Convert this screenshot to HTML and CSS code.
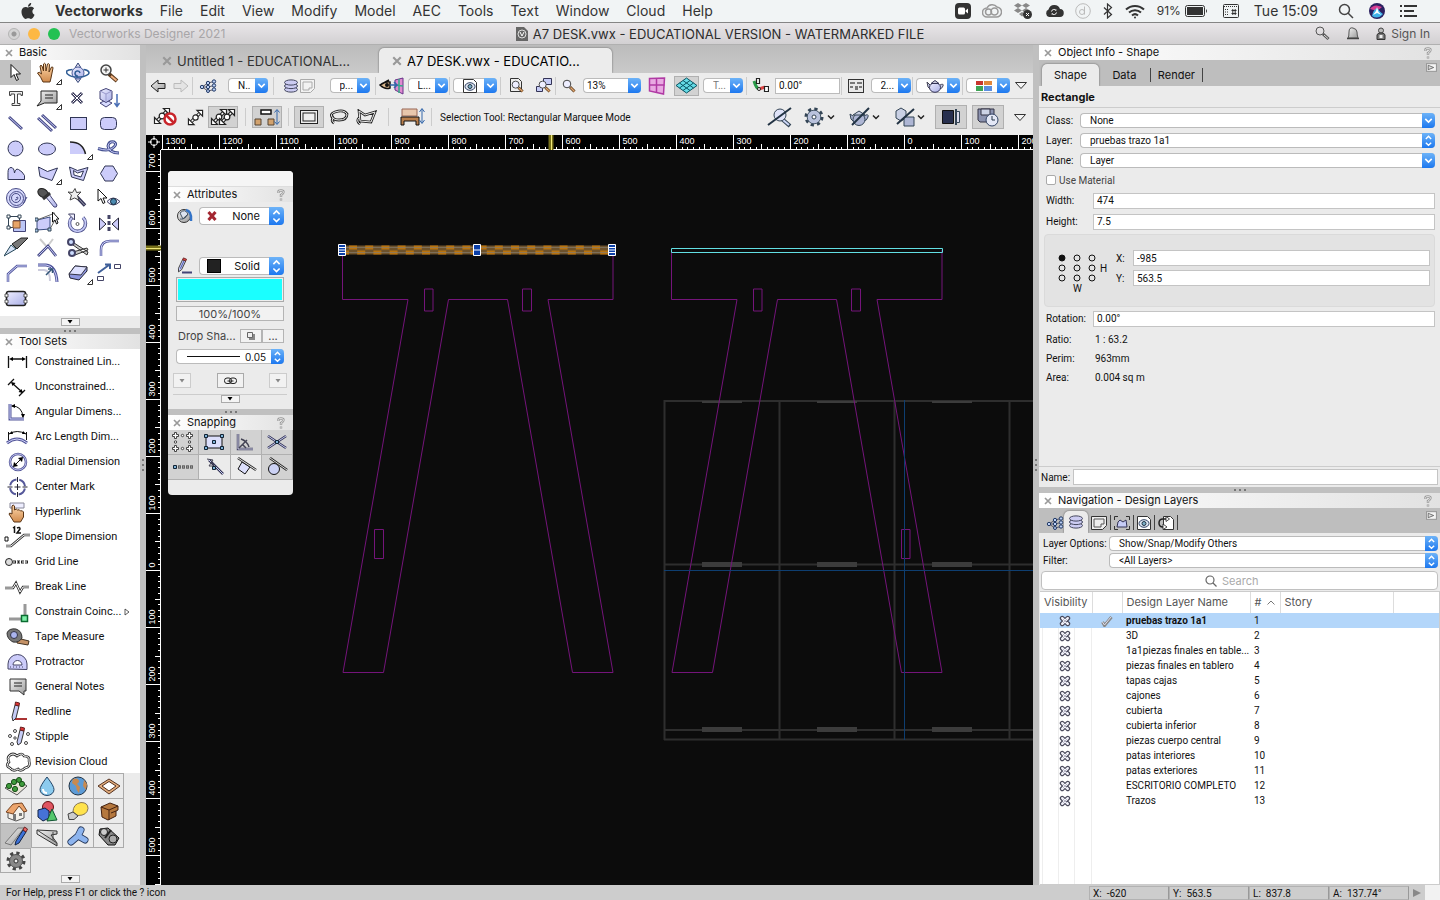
FILE: index.html
```html
<!DOCTYPE html>
<html lang="en">
<head>
  <meta charset="UTF-8" />
  <meta name="viewport" content="width=device-width, initial-scale=1.0" />
  <title>A7 DESK.vwx - Vectorworks Designer 2021</title>
  <link rel="stylesheet" href="styles.css">
</head>
<body>
  <!-- shared icons -->
  <svg class="sprite" aria-hidden="true">
    <defs>
      <linearGradient id="metal" x1="0" y1="0" x2="1" y2="1"><stop offset="0" stop-color="#f4f4f4"/><stop offset="1" stop-color="#999"/></linearGradient>
      <linearGradient id="skin" x1="0" y1="0" x2="0" y2="1"><stop offset="0" stop-color="#ffd9ad"/><stop offset="1" stop-color="#d08a4c"/></linearGradient>
      <linearGradient id="lilac" x1="0" y1="0" x2="1" y2="1"><stop offset="0" stop-color="#eeeeff"/><stop offset="1" stop-color="#a9aee6"/></linearGradient>
    </defs>
    <symbol id="down" viewBox="0 0 12 14"><path d="M3 5.500l3 3 3-3" fill="none" stroke="#fff" stroke-width="1.500"/></symbol>
    <symbol id="updown" viewBox="0 0 12 14"><path d="M3.500 5.500L6 3l2.500 2.500M3.500 9L6 11.500 8.500 9" fill="none" stroke="#fff" stroke-width="1.300"/></symbol>
    <symbol id="close" viewBox="0 0 8 8"><path d="M1 1l6 6M7 1L1 7" stroke="#999" stroke-width="1.700"/></symbol>
    <symbol id="help" viewBox="0 0 8 12"><path d="M1.500 4V2.500Q1.500 1.500 4 1.500T6.500 3Q6.500 4.500 4 6v2M4 9.500v2" fill="none" stroke="#999" stroke-width="2.400"/><path d="M1.500 3.600V2.500Q1.500 1.500 4 1.500T6.500 3Q6.500 4.500 4 6v1.600M4 10v1" fill="none" stroke="#eee" stroke-width=".8"/></symbol>
    <symbol id="caret" viewBox="0 0 8 4"><path d="M1.500 0h5L4 3.500z"/></symbol>
    <symbol id="flyout" viewBox="0 0 10 8"><rect x=".5" y=".5" width="9" height="7" fill="#f4f4f4" stroke="#999"/><path d="M2 2l5 2-5 2z" fill="#ddd" stroke="#555" stroke-width=".7"/></symbol>
    <symbol id="tri" viewBox="0 0 14 9"><path d="M1.500 1.500h11L7 7.500z" fill="#f4f4f4" stroke="#333"/></symbol>
    <symbol id="classes" viewBox="0 0 18 14"><path d="M3 8L9 4 15 2.500M3 8l6 0 6-1.500M3 8l6 4 6-1.500" stroke="#556" fill="none"/><g fill="#bcd0f5" stroke="#223a66"><circle cx="3" cy="8" r="1.700"/><circle cx="9" cy="4" r="1.700"/><circle cx="9" cy="8" r="1.700"/><circle cx="9" cy="12" r="1.500"/><circle cx="15" cy="2.500" r="1.700"/><circle cx="15" cy="6.500" r="1.700"/><circle cx="15" cy="10.500" r="1.700"/></g></symbol>
    <symbol id="layers" viewBox="0 0 16 14"><g fill="#ccccf2" stroke="#44475f"><ellipse cx="8" cy="10.500" rx="6.500" ry="2.600"/><ellipse cx="8" cy="7" rx="6.500" ry="2.600"/><ellipse cx="8" cy="3.500" rx="6.500" ry="2.600"/></g></symbol>
    <symbol id="lens" viewBox="0 0 14 14"><path d="M8 8l4.500 4.500" stroke="#5b3a1c" stroke-width="3"/><path d="M8.500 8.500l4 4" stroke="#e0a670" stroke-width="1.500"/><circle cx="5" cy="5" r="3.800" fill="#eef" stroke="#444"/></symbol>
    <symbol id="eyepage" viewBox="0 0 14 14"><path d="M.5.5h10l3 3v10H.5z" fill="#fff" stroke="#333"/><ellipse cx="7" cy="7.500" rx="5" ry="3.800" fill="#dde6f2" stroke="#346"/><circle cx="7" cy="7.500" r="2" fill="#7bb0c8" stroke="#234"/></symbol>
    <symbol id="hidden" viewBox="0 0 12 12"><path d="M3.200 3.200l5.600 5.600M8.800 3.200L3.200 8.800" stroke="#4a4a5c" stroke-width="4.800" stroke-linecap="round"/><path d="M3.200 3.200l5.600 5.600M8.800 3.200L3.200 8.800" stroke="#f2f2fa" stroke-width="2.400" stroke-linecap="round"/><path d="M4 4l4 4M8 4L4 8" stroke="#aab" stroke-width=".8"/></symbol>
    <symbol id="pencil" viewBox="0 0 20 20"><path d="M5 12.500L9.500 3l3.500 1.500L8.500 14 5 16.500z" fill="#c6ccf6" stroke="#333"/><path d="M9.500 3l1-2 3.500 1.500-1 2z" fill="#e04444" stroke="#622"/><path d="M11 4.500L7 13" stroke="#3947a0"/></symbol>
    <symbol id="snapseg" viewBox="0 0 18 18"><path d="M3 15L15 3" stroke="#222" stroke-width="3.500"/><path d="M3 15L15 3" stroke="#fff" stroke-width="1.400"/><g fill="#fff" stroke="#222" stroke-width="1.200"><circle cx="9" cy="9" r="2.800"/><path d="M1.500 10.500v6h6zM10.500 1.500h6v6z"/></g></symbol>
    <symbol id="teapot" viewBox="0 0 18 14"><path d="M4 6L1 3l1 5 3 3M14 6q4-2 3 1t-4 3" fill="#c8cdea" stroke="#445"/><ellipse cx="9" cy="8.500" rx="5.500" ry="4.800" fill="url(#lilac)" stroke="#335"/><path d="M5 4.500h8L9 1.500z" fill="#ccd" stroke="#335"/></symbol>
    <symbol id="flag" viewBox="0 0 6 6"><path d="M.5 5.500h5v-5z" fill="#fff" stroke="#333"/></symbol>
  </svg>

  <header class="menubar">
    <svg class="apple" width="14" height="16" viewBox="2 0 20 24" fill="#333"><path d="M12.152 6.896c-.948 0-2.415-1.078-3.960-1.040-2.040.027-3.910 1.183-4.961 3.014-2.117 3.675-.546 9.103 1.519 12.090 1.013 1.454 2.208 3.090 3.792 3.039 1.520-.065 2.090-.987 3.935-.987 1.831 0 2.350.987 3.960.948 1.637-.026 2.676-1.480 3.676-2.948 1.156-1.688 1.636-3.325 1.662-3.415-.039-.013-3.182-1.221-3.220-4.857-.026-3.040 2.480-4.494 2.597-4.559-1.429-2.090-3.623-2.324-4.390-2.376-2-.156-3.675 1.090-4.610 1.090zM15.530 3.830c.843-1.012 1.400-2.427 1.245-3.830-1.207.052-2.662.805-3.532 1.818-.78.896-1.454 2.338-1.273 3.714 1.338.104 2.715-.688 3.559-1.701"/></svg>
    <nav class="menus">
      <a href="#" class="app">Vectorworks</a>
      <a href="#">File</a><a href="#">Edit</a><a href="#">View</a><a href="#">Modify</a><a href="#">Model</a><a href="#">AEC</a><a href="#">Tools</a><a href="#">Text</a><a href="#">Window</a><a href="#">Cloud</a><a href="#">Help</a>
    </nav>
    <div class="extras">
      <svg width="16" height="16" viewBox="0 0 16 16"><rect width="16" height="16" rx="4" fill="#333"/><rect x="3" y="4.500" width="7" height="7" rx="1.500" fill="#fff"/><path d="M10.500 7.500L13 5.500v5l-2.500-2z" fill="#fff"/></svg>
      <svg width="20" height="16" viewBox="0 0 20 16" fill="none" stroke="#999" stroke-width="1.500"><path d="M5 14h9a5 5 0 0 0 1-10A6 6 0 0 0 5 5a4.500 4.500 0 0 0 0 9z"/><circle cx="6.500" cy="9" r="3"/><circle cx="12.500" cy="8.500" r="3.500"/></svg>
      <svg width="20" height="16" viewBox="0 0 20 16"><g fill="#888"><path d="M5 0l4 2.500L5 5 1 2.500zM13 0l4 2.500L13 5 9 2.500zM5 5l4 2.500L5 10 1 7.500zM13 5l4 2.500-4 2.500-4-2.500zM9 9l3 2-3 2.500L6 11z"/></g><circle cx="14.500" cy="11.500" r="4.500" fill="#333"/><path d="M13 10l3 3M16 10l-3 3" stroke="#fff"/></svg>
      <svg width="20" height="14" viewBox="0 0 20 14"><path d="M5 13h10.500a4 4 0 0 0 .5-8 6 6 0 0 0-11.500.5A4 4 0 0 0 5 13z" fill="#333"/><path d="M7.500 7.500a2.500 2.500 0 0 1 4.500-1v-1M12.500 8.500a2.500 2.500 0 0 1-4.500 1v1" stroke="#fff" fill="none"/></svg>
      <svg width="16" height="16" viewBox="0 0 16 16" fill="none" stroke="#bbb"><circle cx="8" cy="8" r="7.300"/><circle cx="7" cy="9" r="2.500"/><path d="M9.500 3.500v8"/></svg>
      <svg width="12" height="16" viewBox="0 0 12 16" fill="none" stroke="#333" stroke-width="1.200"><path d="M2 4.500l7.500 7-4 3.500V1l4 3.500-7.500 7"/></svg>
      <svg width="20" height="15" viewBox="0 0 20 15" fill="none" stroke="#333" stroke-width="2"><path d="M1 5.500a13 13 0 0 1 18 0M4 8.500a9 9 0 0 1 12 0M7 11.500a4.500 4.500 0 0 1 6 0"/><circle cx="10" cy="13.500" r="1" fill="#333" stroke="none"/></svg>
    </div>
    <div class="extras clock-group">
      <span class="battery">91%<svg width="23" height="12" viewBox="0 0 23 12"><rect x=".5" y=".5" width="19" height="11" rx="2" fill="none" stroke="#333"/><rect x="2" y="2" width="16" height="8" fill="#333"/><path d="M21 4q2 2 0 4z" fill="#333"/></svg></span>
      <svg width="16" height="14" viewBox="0 0 16 14" fill="none" stroke="#333"><rect x=".5" y=".5" width="15" height="13" rx="1"/><path d="M1 2.500h14M2 5.500h4M2 8h4M2 10.500h4" stroke-dasharray="1 1"/><path d="M8.500 6.500h5M8.500 9.500h5M9.800 5v6M12.200 5v6"/></svg>
      <span class="clock">Tue 15:09</span>
      <svg width="16" height="16" viewBox="0 0 16 16" fill="none" stroke="#444" stroke-width="1.500"><circle cx="6.500" cy="6.500" r="5"/><path d="M10 10l5 5"/></svg>
      <svg width="16" height="16" viewBox="0 0 16 16"><circle cx="8" cy="8" r="8" fill="#2b2060"/><path d="M1 6q4-6 12-2l-5 4z" fill="#d33c92"/><path d="M3 13q1-6 5-8 3 4 6 6-5 6-11 2z" fill="#3fb2e8"/><path d="M8 4l1.500 5 3 3L8 10l-4 2 3-4z" fill="#fff"/></svg>
      <svg width="18" height="12" viewBox="0 0 18 12" stroke="#333" stroke-width="2"><path d="M0 1h2M4 1h13M0 6h2M4 6h10M0 11h2M4 11h13"/></svg>
    </div>
  </header>

  <div class="titlebar">
    <div class="lights">
      <i class="light off"></i><i class="light min"></i><i class="light max"></i>
      <span>Vectorworks Designer 2021</span>
    </div>
    <div class="doc-title">
      <svg width="12" height="14" viewBox="0 0 12 14"><path d="M0 0h8l4 4v10H0z" fill="#666"/><circle cx="6" cy="7" r="4" fill="none" stroke="#ddd"/><path d="M4 5l2 4 2-4" stroke="#fff" fill="none"/></svg>
      A7 DESK.vwx - EDUCATIONAL VERSION - WATERMARKED FILE
    </div>
    <div class="account">
      <svg width="15" height="15" viewBox="0 0 15 15" fill="none"><path d="M8 8l5.500 5" stroke="#555" stroke-width="3"/><path d="M9 9l4 3.500" stroke="#ddd"/><circle cx="5" cy="5" r="4" stroke="#555"/></svg>
      <svg width="14" height="14" viewBox="0 0 14 14"><path d="M2 11q1-1 1-6t4-4 4 4 1 6z" fill="url(#metal)" stroke="#555"/><path d="M1 11.500h12" stroke="#444" stroke-width="1.500"/></svg>
      <a href="#"><svg width="10" height="13" viewBox="0 0 10 13"><circle cx="5" cy="3.500" r="2.500" fill="#bbb" stroke="#444"/><path d="M1 12.500V8q0-2 4-2t4 2v4.500z" fill="#777" stroke="#333"/><rect x="3.500" y="8" width="3" height="3" fill="#eee"/></svg>Sign In</a>
    </div>
  </div>

  <main class="workspace">
    <aside class="left">
      <h2 class="palette-head"><svg width="8" height="8"><use href="#close"/></svg>Basic</h2>
      <div class="tools">
        <button class="on" aria-label="Selection"><svg viewBox="0 0 24 24"><path d="M7 3.500v13l3-3 2.500 6 2-1-2.500-5.500h4.500z" fill="#fff" stroke="#111"/></svg></button>
        <button aria-label="Pan"><svg viewBox="0 0 24 24"><path d="M8 21q-2-5-5.500-9 1.500-2 4 1L5 5q1-1.500 2 0l1.500 5L8.500 3q1-1.500 2 0l.5 7 1.500-7q1-1 2 .5l-.5 7.500 2.500-5q1.500-.5 1.500 1L16 17l-1 4z" fill="url(#skin)" stroke="#5a3515"/></svg><svg class="flag"><use href="#flag"/></svg></button>
        <button aria-label="Flyover"><svg viewBox="0 0 24 24"><path d="M12 2l2.500 4v12L12 21.500 9.500 18V6z" fill="#dde" stroke="#347"/><circle cx="12" cy="12" r="6" fill="url(#lilac)" stroke="#4a5a98"/><path d="M6.500 8.500Q-2 9 1.500 13q5 4.500 16 2.500 7-2 5-5-1-1.500-5-2M12 15a2.500 2.500 0 1 1 2-3" fill="none" stroke="#335f96" stroke-width="1.600"/></svg></button>
        <button aria-label="Zoom"><svg viewBox="0 0 24 24"><path d="M12 13l8 7" stroke="#5b3a1c" stroke-width="4"/><path d="M14 15l5.500 4.500" stroke="#f0b080" stroke-width="2"/><circle cx="9" cy="9" r="5" fill="#f4f4f4" stroke="#444" stroke-width="1.500"/><path d="M6.500 9h5M9 6.500v5" stroke="#333"/></svg></button>
        <button aria-label="Text"><svg viewBox="0 0 24 24"><path d="M5.500 5.500h13v4H17V8h-3.500v9.500H16v2H8v-2h2.500V8H7v1.500H5.500z" fill="#eee" stroke="#444"/></svg></button>
        <button aria-label="Callout"><svg viewBox="0 0 24 24"><path d="M6 5h16v12H9.500L2 20l4-5z" fill="url(#metal)" stroke="#222"/><path d="M10 9h8M10 12h8" stroke="#222"/></svg><svg class="flag"><use href="#flag"/></svg></button>
        <button aria-label="Locus"><svg viewBox="0 0 24 24"><path d="M6 7l10 10M16 7L6 17" stroke="#335" stroke-width="3"/><path d="M6.500 7.500l9 9M15.500 7.500l-9 9" stroke="#fff"/></svg></button>
        <button aria-label="Symbol"><svg viewBox="0 0 24 24"><path d="M3 17l6-3 6 3-6 4z" fill="#d8dcff" stroke="#447"/><path d="M3 5l6-2.500L15 5v8l-6 3.500L3 13z" fill="url(#lilac)" stroke="#447"/><path d="M3 5l6 3 6-3M9 8v8" stroke="#99c" fill="none"/><path d="M20 8v12M17.500 17l2.500 3.500 2.500-3.500" stroke="#4a6fb5" fill="none" stroke-width="1.500"/></svg></button>
        <button aria-label="Line"><svg viewBox="0 0 24 24"><path d="M5 6l13 12" stroke="#4a4d88" stroke-width="3"/><path d="M5.500 6.500l12 11" stroke="#c4c8f5"/></svg></button>
        <button aria-label="Double Line"><svg viewBox="0 0 24 24"><path d="M3 7l14 13M7 4l14 13" stroke="#4a4d88" stroke-width="3"/><path d="M3.500 7.500l13 12M7.500 4.500l13 12" stroke="#c4c8f5"/></svg></button>
        <button aria-label="Rectangle"><svg viewBox="0 0 24 24" class="lil"><rect x="4.500" y="6.500" width="16" height="12"/></svg></button>
        <button aria-label="Rounded Rectangle"><svg viewBox="0 0 24 24" class="lil"><rect x="3.500" y="6.500" width="16" height="12" rx="4"/></svg></button>
        <button aria-label="Circle"><svg viewBox="0 0 24 24" class="lil"><circle cx="11.500" cy="12.500" r="7.500"/></svg></button>
        <button aria-label="Oval"><svg viewBox="0 0 24 24" class="lil"><ellipse cx="12" cy="13" rx="8.500" ry="6"/></svg></button>
        <button aria-label="Arc"><svg viewBox="0 0 24 24"><path d="M4 6q13 0 15.500 12H4z" fill="#ccccfa"/><path d="M4 6q13 0 15.500 12" stroke="#222" fill="none" stroke-width="1.500"/></svg><svg class="flag"><use href="#flag"/></svg></button>
        <button aria-label="Freehand"><svg viewBox="0 0 24 24" fill="none"><path d="M1 12.500q9 3 14 0 6-4 2-6.500-5-1-6 4 1 7 11 7" stroke="#44508f" stroke-width="3"/><path d="M1.500 12.500q9 3 13.500 0 6-4 2-6.500-5-1-6 4 1 7 10.500 7" stroke="#c4c8f5"/></svg></button>
        <button aria-label="Polyline"><svg viewBox="0 0 24 24" class="lil"><path d="M4 18.500v-7q0-5 3-5 3 0 3.500 5.500 1-5 4-3.500 4 2 6 6v4z"/></svg></button>
        <button aria-label="Polygon"><svg viewBox="0 0 24 24" class="lil"><path d="M3.500 6l9 4.500L22.500 7 17 19.500l-12-4z"/></svg><svg class="flag"><use href="#flag"/></svg></button>
        <button aria-label="Double Polygon"><svg viewBox="0 0 24 24" class="lil"><path d="M3.500 6l8 3.500L22 6.500l-4.500 13-12-3.500z"/><path d="M7.500 9.500l4 2.500 6-2-2.500 6-7-2z" fill="#fff"/></svg></button>
        <button aria-label="Regular Polygon"><svg viewBox="0 0 24 24" class="lil"><path d="M8 5h8l4.500 7.500L16 20H8l-4.500-7.500z"/></svg></button>
        <button aria-label="Spiral"><svg viewBox="0 0 24 24" fill="none" stroke="#4a4d88"><circle cx="12" cy="12" r="9.500" fill="#d5d8fb"/><circle cx="12.500" cy="12.500" r="7"/><circle cx="12" cy="12" r="4.500"/><path d="M12 12q2-2 2 0t-3 2"/><path d="M19 18l4-7"/></svg></button>
        <button aria-label="Eyedropper"><svg viewBox="0 0 24 24"><path d="M10 10l9 11q3 1 3-2L14 8z" fill="url(#lilac)" stroke="#447"/><ellipse cx="8" cy="7" rx="5.500" ry="4" transform="rotate(30 8 7)" fill="#555" stroke="#222"/><path d="M8 13l7-6" stroke="#333" stroke-width="3"/></svg></button>
        <button aria-label="Select Similar"><svg viewBox="0 0 24 24"><path d="M10 10l9 9.500" stroke="#335" stroke-width="3.500"/><path d="M11 11l7.500 8" stroke="#aab"/><path d="M9 2.500l1.500 4 4.500-.5-3.500 3.500L13 14l-4.500-2L4 14l1.500-5L2 6l4.500.5z" fill="#eee" stroke="#444"/></svg></button>
        <button aria-label="Visibility"><svg viewBox="0 0 24 24"><path d="M1 3v12l3-2.500 2 5 2-1-2-4.500h4z" fill="#fff" stroke="#111"/><path d="M10 15.500q6-7 13 0-7 7-13 0z" fill="#eef" stroke="#446"/><circle cx="16.500" cy="15.500" r="3" fill="#4b8ab0" stroke="#123"/></svg></button>
        <button aria-label="Clip"><svg viewBox="0 0 24 24"><path d="M9.500 9.500h12v11h-12z" fill="#bcc6f6" stroke="#447"/><path d="M4.500 5.500h11v11h-11z" fill="none" stroke="#345"/><path d="M9 10h7v7H9z" fill="#e8a468" stroke="#853"/><path d="M3 4h3v3H3zM14 4h3v3h-3zM3 15h3v3H3z" fill="#fff" stroke="#345"/></svg></button>
        <button aria-label="Reshape"><svg viewBox="0 0 24 24"><path d="M2 9l13-3v12L2 19z" fill="#ccccfa" stroke="#3a4c80"/><path d="M2 9L20 2M15 18l5-9" stroke="#666"/><path d="M0 7h3v3H0zM0 18h3v3H0zM13 17h3v3h-3z" fill="#aac8e8" stroke="#345"/><path d="M17.500 1v10l2.500-2 1.500 4 1.500-1-1.500-4h2.500z" fill="#fff" stroke="#111"/></svg></button>
        <button aria-label="Rotate"><svg viewBox="0 0 24 24" fill="none"><path d="M6 6.500a8 8 0 1 0 11 0" stroke="#4a4d88" stroke-width="3.500"/><path d="M6 6.500a8 8 0 1 0 11 0" stroke="#c4c8f5" stroke-width="1.800"/><path d="M2.500 3h6v6z" fill="#eef" stroke="#446"/><circle cx="11.500" cy="13" r="1.500" stroke="#555"/></svg></button>
        <button aria-label="Mirror"><svg viewBox="0 0 24 24"><path d="M2.500 7v12l6.500-6z" fill="#ccccfa" stroke="#223"/><path d="M21.500 7v12L15 13z" fill="#ccccfa" stroke="#223"/><path d="M12 4v18" stroke="#446" stroke-width="3" stroke-dasharray="4 2"/></svg></button>
        <button aria-label="Split"><svg viewBox="0 0 24 24"><path d="M0 20l7-11 5 4z" fill="#d5e2f6" stroke="#245"/><path d="M8 8l9-6h7L13 13z" fill="#777" stroke="#222"/></svg></button>
        <button aria-label="Connect/Combine"><svg viewBox="0 0 24 24"><path d="M5 3l7 8 6-8" stroke="#ccc" stroke-width="2" fill="none"/><path d="M3 20L13 10l8 10" stroke="#4a4d88" stroke-width="2.800" fill="none"/><path d="M3.500 19.500L13 10l8 10" stroke="#c4c8f5" fill="none"/></svg></button>
        <button aria-label="Trim"><svg viewBox="0 0 24 24"><path d="M7 9l14 10 1-3L8 7M7 16l14-4 1 2-13 5" fill="#ccc" stroke="#333"/><circle cx="5" cy="6" r="3" fill="#cdf" stroke="#446" stroke-width="2"/><circle cx="6" cy="17" r="3" fill="#cdf" stroke="#446" stroke-width="2"/></svg></button>
        <button aria-label="Fillet"><svg viewBox="0 0 24 24" fill="none"><path d="M4 20v-6q0-9 9-9h9" stroke="#4f549a" stroke-width="2.500"/><path d="M4 20v-6q0-9 9-9h9" stroke="#cfd2fa"/></svg></button>
        <button aria-label="Chamfer"><svg viewBox="0 0 24 24" fill="none"><path d="M4 21v-8l9-8h10" stroke="#4f549a" stroke-width="2.500"/><path d="M4 21v-8l9-8h10" stroke="#cfd2fa"/></svg></button>
        <button aria-label="Offset"><svg viewBox="0 0 24 24" fill="none"><path d="M3 9h6q6 0 6 11" stroke="#ccd" stroke-width="2"/><path d="M3 4h8q10 1 11 17" stroke="#4f549a" stroke-width="3"/><path d="M3 4h8q10 1 11 17" stroke="#cfd2fa"/><path d="M11 14l6-6M13 8h4.500v4" stroke="#357" stroke-width="1.500"/></svg></button>
        <button aria-label="Eraser"><svg viewBox="0 0 24 24"><path d="M3 13l6-8 12 1v4l-8 9-9-2z" fill="#8f98e0" stroke="#223"/><path d="M3 13l6-8 12 1-6 8z" fill="#dfe2ff" stroke="#334"/></svg><svg class="flag"><use href="#flag"/></svg></button>
        <button aria-label="Attribute Mapping"><svg viewBox="0 0 24 24"><path d="M17.500 3.500h6v4h-6zM.5 15.500h6v4h-6z" fill="#fff" stroke="#446"/><path d="M1 12l11-8M8 3.500h5V8" stroke="#3f5f99" fill="none" stroke-width="2"/></svg></button>
        <button aria-label="Wall Join"><svg viewBox="0 0 24 24"><rect x="2.500" y="5.500" width="19" height="14" rx="2" fill="url(#lilac)" stroke="#222" stroke-width="1.500"/><path d="M1 8h3v3H1zM1 14h3v3H1zM20 8h3v3h-3zM20 14h3v3h-3z" fill="#fff" stroke="#333" stroke-width=".8"/></svg></button>
      </div>
      <div class="more"><button aria-label="More tools"><svg width="8" height="4"><use href="#caret"/></svg></button></div>
      <div class="grip"></div>
      <h2 class="palette-head"><svg width="8" height="8"><use href="#close"/></svg>Tool Sets</h2>
      <ul class="toolset">
        <li><svg viewBox="0 0 28 24"><path d="M4.500 6v12M22.500 6v12M7 9h13" stroke="#111" stroke-width="1.300"/><path d="M5 9l4-2v4zM22 9l-4-2v4z"/></svg>Constrained Lin...</li>
        <li><svg viewBox="0 0 28 24"><path d="M4 10l6-6M15 21l6-6M8 8l10 9" stroke="#111" stroke-width="1.300"/><path d="M7 7l4.500 1-3 3zM19 18l-4.500-1 3-3z"/></svg>Unconstrained...</li>
        <li><svg viewBox="0 0 28 24"><path d="M6 4v15h14" stroke="#55589a" stroke-width="3" fill="none"/><path d="M6 4v15h14" stroke="#cfd2fa" fill="none"/><path d="M8 6q10 0 11 11" stroke="#111" fill="none"/><path d="M7 6l4-2v4zM19 18l-2-4h4z"/></svg>Angular Dimens...</li>
        <li><svg viewBox="0 0 28 24"><path d="M3 18q10-8 20 0" stroke="#55589a" stroke-width="3" fill="none"/><path d="M3 18q10-8 20 0" stroke="#cfd2fa" fill="none"/><path d="M4.500 7v8M22.500 7v8M5 9q8-5 17 0" stroke="#111" fill="none"/><path d="M5 9l3-3 1 3zM22 9l-3-3-1 3z"/></svg>Arc Length Dim...</li>
        <li><svg viewBox="0 0 28 24"><circle cx="14" cy="12" r="8" fill="#fff" stroke="#55589a" stroke-width="2.500"/><circle cx="14" cy="12" r="8" fill="none" stroke="#cfd2fa" stroke-width=".8"/><path d="M10 16l8-8" stroke="#111"/><path d="M9 17l1-5 4 4zM19 7l-1 5-4-4z"/></svg>Radial Dimension</li>
        <li><svg viewBox="0 0 28 24"><circle cx="13.500" cy="12" r="7.500" fill="none" stroke="#55589a" stroke-width="2" stroke-dasharray="9 2.800" stroke-dashoffset="-1.500"/><path d="M13.500 9v6M10.500 12h6M13.500 2v5M13.500 17v5M3.500 12h5M18.500 12h5" stroke="#223"/></svg>Center Mark</li>
        <li><svg viewBox="0 0 28 24"><path d="M6 3h14v5H6z" fill="#eef" stroke="#889"/><path d="M10 22l-5-8q0-2 3 0V6q1-2 2.500 0v4q2-2 3 0 2-1 3 1 2-1 3 1v5l-3 5z" fill="url(#skin)" stroke="#5a3515"/></svg>Hyperlink</li>
        <li><svg viewBox="0 0 28 24"><path d="M2 21h5L20 10h6" stroke="#333" stroke-width="2.500" fill="none"/><path d="M2 21h5L20 10h6" stroke="#fff" fill="none"/><path d="M9 3l1.500-1v6M13 3q3-1.500 3 1L13 8h4" stroke="#111" stroke-width="1.500" fill="none"/><path d="M1 12h3v4H1z" fill="#fff" stroke="#111"/></svg>Slope Dimension</li>
        <li><svg viewBox="0 0 28 24"><path d="M9 12h16" stroke="#222" stroke-width="3" stroke-dasharray="3 1"/><path d="M9 12h16" stroke="#fff" stroke-dasharray="2 1"/><circle cx="5" cy="12" r="3.500" fill="#ddd" stroke="#222"/></svg>Grid Line</li>
        <li><svg viewBox="0 0 28 24" fill="none"><path d="M1 13h8l3-5 4 9 3-5h6" stroke="#333" stroke-width="2.500"/><path d="M1 13h8l3-5 4 9 3-5h6" stroke="#fff"/></svg>Break Line</li>
        <li><svg viewBox="0 0 28 24"><path d="M5 19h16V4" stroke="#333" stroke-width="2.500" fill="none"/><path d="M5 19h16V4" stroke="#fff" fill="none"/><rect x="17.500" y="15.500" width="6" height="6" fill="#7df0a8" stroke="#0a6b30" stroke-width="1.500"/></svg>Constrain Coinc...<svg class="next" viewBox="0 0 6 8"><path d="M1 1l4 3-4 3z" fill="#fff" stroke="#333" stroke-width=".8"/></svg></li>
        <li><svg viewBox="0 0 28 24"><path d="M13 13l12 3-1 4-11-2z" fill="#c59266" stroke="#432"/><path d="M3 8q2-5 9-4 6 2 6 9-3 5-9 4-6-3-6-9z" fill="#777" stroke="#333"/><circle cx="10" cy="10" r="3.500" fill="#aab4ee" stroke="#334"/></svg>Tape Measure</li>
        <li><svg viewBox="0 0 28 24"><path d="M4 19v-5a9.500 9.500 0 0 1 19 0v5.500z" fill="#ccccfa" stroke="#446"/><path d="M9 15a4.500 4.500 0 0 1 9 0z" fill="#fff" stroke="#446"/><path d="M6 17h15" stroke="#446" stroke-dasharray="1 2"/></svg>Protractor</li>
        <li><svg viewBox="0 0 28 24"><path d="M6 4h16v12h-2v4l-5-4H6z" fill="url(#metal)" stroke="#333"/><path d="M10 8h8M10 11h8" stroke="#222"/></svg>General Notes</li>
        <li><svg viewBox="0 0 28 24"><path d="M11 19h12" stroke="#a33" stroke-width="2"/><path d="M8 17l3-12 4 1-3 12-3 3z" fill="#c6ccf6" stroke="#333"/><path d="M11 5l.5-3 4 1-.5 3z" fill="#d33" stroke="#622"/></svg>Redline</li>
        <li><svg viewBox="0 0 28 24"><path d="M13 17l3-12 4 1-3 12-3 2z" fill="#c6ccf6" stroke="#333"/><path d="M16 5l.5-3 4 1-.5 3z" fill="#d33" stroke="#622"/><g fill="#fff" stroke="#444"><circle cx="6" cy="11" r="1.500"/><circle cx="11" cy="6" r="1.500"/><circle cx="8" cy="19" r="1.500"/><circle cx="22" cy="18" r="1.500"/><circle cx="24" cy="9" r="1.500"/><circle cx="11" cy="13" r="1.200"/></g></svg>Stipple</li>
        <li><svg viewBox="0 0 28 24" fill="none"><path d="M5 6q4-4 8 0 5-4 7 0 6 0 5 5 2 6-4 7-4 4-7 1-5 3-8-1-5-2-1-6-2-4 0-6z" stroke="#333" stroke-width="2.600"/><path d="M5 6q4-4 8 0 5-4 7 0 6 0 5 5 2 6-4 7-4 4-7 1-5 3-8-1-5-2-1-6-2-4 0-6z" stroke="#fff"/></svg>Revision Cloud</li>
      </ul>
      <div class="categories">
        <button aria-label="Site Planning"><svg viewBox="0 0 24 22"><path d="M1 13l12-9 10 7-10 9z" fill="#e8e4d8" stroke="#555"/><g fill="#3e9b3c" stroke="#174d17"><circle cx="5" cy="11" r="2.600"/><circle cx="10" cy="7" r="2.600"/><circle cx="15" cy="5" r="2.500"/><circle cx="11" cy="14" r="2.600"/><circle cx="18" cy="9" r="2.600"/></g></svg></button>
        <button aria-label="Irrigation"><svg viewBox="0 0 24 22"><path d="M12 2q7 9 7 12.500a7 6 0 0 1-14 0Q5 11 12 2z" fill="#8ccbee" stroke="#246"/><path d="M8 14q0 4 4 4" stroke="#fff" fill="none" stroke-width="2"/></svg></button>
        <button aria-label="GIS"><svg viewBox="0 0 24 22"><circle cx="12" cy="11" r="9" fill="#5d9bd6" stroke="#234"/><path d="M7 4q6-2 6 3l-2 2 3 3-1 6q-3-3-3-7L6 8zM18 5l3 4-1 6-3-4z" fill="#c98a50"/></svg></button>
        <button aria-label="Space Planning"><svg viewBox="0 0 24 22"><path d="M1 11l11-7 11 7-11 8z" fill="#e3ad7c" stroke="#532"/><path d="M5 11l7-4.500 7 4.500-7 5z" fill="#fff" stroke="#532"/></svg></button>
        <button aria-label="Building Shell"><svg viewBox="0 0 24 22"><path d="M4 11v7l8 3 8-3v-7l-5-5z" fill="#f4f1ea" stroke="#555"/><path d="M2 12l7-8 9-1 5 8-3 1-5-6-6 8z" fill="#eca46c" stroke="#742"/><path d="M9 14h3v6H9zM15 13h3v3h-3z" fill="#777"/></svg></button>
        <button aria-label="3D Modeling"><svg viewBox="0 0 24 22"><circle cx="13" cy="7" r="5.500" fill="#e05561" stroke="#611"/><path d="M3 10l7-2 4 3v7l-6 3-5-4z" fill="#4672d8" stroke="#124"/><path d="M17 9l5 11-10 1z" fill="#54c76c" stroke="#153"/></svg></button>
        <button aria-label="Visualization"><svg viewBox="0 0 24 22"><path d="M7 12q0-8 8-9.500 7 0 7 6-1 7-10 7z" fill="#ffe34d" stroke="#875"/><path d="M2 14l5-2 5 4-4 3.500-5 0z" fill="#ccc" stroke="#444"/></svg></button>
        <button aria-label="Furniture"><svg viewBox="0 0 24 22"><path d="M4 7l9-4 8 3v4l-2 1v5l-8 4-6-3z" fill="#b5783e" stroke="#421"/><path d="M4 7l8 3 9-4M12 10v10M14 13l5-2" stroke="#421" fill="none"/></svg></button>
        <button class="on" aria-label="Dims/Notes"><svg viewBox="0 0 24 22"><path d="M1 18L14 3h6L7 20z" fill="url(#metal)" stroke="#777"/><path d="M12 16L19 5l3 2-7 11-4 2z" fill="#3d72d8" stroke="#124"/><path d="M19 5l1.500-3 3 2L22 7z" fill="#e66" stroke="#622"/></svg></button>
        <button aria-label="Detailing"><svg viewBox="0 0 24 22"><path d="M2 5L22 6v3l-6 1 6 8v3L2 9z" fill="url(#metal)" stroke="#333"/><path d="M2 5l20 13M18 7v8" stroke="#444"/></svg></button>
        <button aria-label="Piping"><svg viewBox="0 0 24 22"><path d="M5 17l7-6 7 4M12 11l3-6" stroke="#235" stroke-width="7" stroke-linecap="round" fill="none"/><path d="M5 17l7-6 7 4M12 11l3-6" stroke="#8db4ee" stroke-width="5.400" stroke-linecap="round" fill="none"/></svg></button>
        <button aria-label="Fasteners"><svg viewBox="0 0 24 22"><path d="M3 4l8-1 11 10-4 7-7 0L2 10z" fill="#888" stroke="#111"/><circle cx="7" cy="7" r="3.500" fill="#ccc" stroke="#222"/><circle cx="16" cy="14" r="4" fill="#aaa" stroke="#222"/><path d="M8 13l6-8" stroke="#222" stroke-width="2"/></svg></button>
        <button aria-label="Machine Design"><svg viewBox="0 0 24 22"><circle cx="12" cy="11" r="7.500" fill="none" stroke="#444" stroke-width="4" stroke-dasharray="3 2.900"/><circle cx="12" cy="11" r="6.500" fill="#888" stroke="#555"/><circle cx="12" cy="11" r="2" fill="#eee" stroke="#333"/></svg></button>
      </div>
      <div class="more"><button aria-label="More tool sets"><svg width="8" height="4"><use href="#caret"/></svg></button></div>
    </aside>

    <div class="gutter"></div>

    <section class="document">
      <div class="doc-tabs">
        <button><svg width="10" height="10" viewBox="0 0 8 8"><use href="#close"/></svg>Untitled 1 - EDUCATIONAL...</button>
        <button class="active"><svg width="10" height="10" viewBox="0 0 8 8"><use href="#close"/></svg>A7 DESK.vwx - EDUCATIO...</button>
      </div>

      <div class="viewbar">
        <svg width="16" height="14" viewBox="0 0 16 14"><path d="M1 7l7-6v3.500h7v5H8V13z" fill="url(#metal)" stroke="#222"/></svg>
        <svg width="16" height="14" viewBox="0 0 16 14"><path d="M15 7L8 1v3.500H1v5h7V13z" fill="#e4e4e4" stroke="#bbb"/></svg>
        <i class="sep"></i>
        <svg width="18" height="14"><use href="#classes"/></svg>
        <span class="combo"><select aria-label="Class"><option>N..</option></select><svg class="arrow"><use href="#down"/></svg></span>
        <i class="sep"></i>
        <svg width="32" height="14" viewBox="0 0 32 14"><use href="#layers" width="16" height="14"/><path d="M17.500.5h14v9l-4 4h-10zM20 3h9v6h-3v2h-6z" fill="#f2f2f2" stroke="#aaa"/></svg>
        <span class="combo"><select aria-label="Layer"><option>p...</option></select><svg class="arrow"><use href="#down"/></svg></span>
        <i class="sep"></i>
        <svg width="25" height="18" viewBox="0 0 25 18"><path d="M1 8l9-5M1 8q5 5 10 3V5q-4-1-10 3z" fill="#dcb98e" stroke="#111" stroke-width="1.500"/><circle cx="8" cy="8" r="2" fill="#111"/><path d="M16 3l8-2v16l-8-4z" fill="#e08ad0" stroke="#638"/><path d="M20 2v14M16 8l8 1" stroke="#3a8" stroke-width="1.500"/><path d="M11 8h7M15 5l3 3-3 3" stroke="#36a" fill="none" stroke-width="1.500"/></svg>
        <span class="combo"><select aria-label="Saved View"><option>L...</option></select><svg class="arrow"><use href="#down"/></svg></span>
        <i class="sep"></i>
        <span class="combo pic"><svg class="face" width="14" height="14"><use href="#eyepage"/></svg><select aria-label="Saved Views"><option></option></select><svg class="arrow"><use href="#down"/></svg></span>
        <i class="sep"></i>
        <svg width="15" height="15" viewBox="0 0 15 15"><path d="M1.500.5h8l3 3v10h-11z" fill="#eee" stroke="#333"/><use href="#lens" x="2" y="2" width="13" height="13"/></svg>
        <svg width="16" height="15" viewBox="0 0 16 15"><path d="M7.500.5h8v6h-8zM.5 8.500h6v5h-6z" fill="#c6ccf6" stroke="#335"/><use href="#lens" x="2" y="2" width="13" height="13"/></svg>
        <i class="sep"></i>
        <svg width="14" height="14"><use href="#lens"/></svg>
        <span class="combo square wide"><select aria-label="Zoom level"><option>13%</option></select><svg class="arrow"><use href="#down"/></svg></span>
        <svg width="18" height="18" viewBox="0 0 18 18"><path d="M1.500 1.500L16.500 1l-1 16-14-3z" fill="#e9a9e2" stroke="#b03aa4" stroke-width="1.500"/><path d="M8.500 1v15M1.500 8h15" stroke="#b03aa4" stroke-width="1.500"/></svg>
        <button class="toggle" aria-label="Unified view"><svg width="23" height="17" viewBox="0 0 23 17"><path d="M1 8.500L11.500 1 22 8.500 11.500 16z" fill="#65dbe6" stroke="#0b5563"/><path d="M4.500 6L15 13.500M8 3.500L18.500 11M4.500 11L15 3.500M8 13.500L18.500 6" stroke="#0b5563"/></svg></button>
        <span class="combo dim"><select aria-label="View"><option>T...</option></select><svg class="arrow"><use href="#down"/></svg></span>
        <i class="sep"></i>
        <svg width="17" height="15" viewBox="0 0 17 15"><path d="M2 3q2 7 5 8" stroke="#2a9a4a" stroke-width="3" fill="none"/><path d="M7 11l6-2" stroke="#d44" stroke-width="3"/><path d="M4.500.5h3v5h-3zM12.500 8.500h4v5h-4z" fill="#fff" stroke="#222" stroke-width="1.200"/><circle cx="7" cy="11" r="1.500" fill="#fff" stroke="#222"/></svg>
        <input class="angle" type="text" value="0.00°" aria-label="Plan rotation">
        <i class="sep"></i>
        <svg width="16" height="14" viewBox="0 0 16 14"><rect x=".5" y=".5" width="15" height="13" fill="#e8e8e8" stroke="#333"/><path d="M2 3h5v2H2zM2 7h3v2H2zM9 3h5v2H9zM7 7h3v4H7zM11 7h3v2h-3z" fill="#777"/></svg>
        <span class="combo"><select aria-label="Projection"><option>2...</option></select><svg class="arrow"><use href="#down"/></svg></span>
        <i class="sep"></i>
        <span class="combo pic"><svg class="face" width="18" height="14"><use href="#teapot"/></svg><select aria-label="Render mode"><option></option></select><svg class="arrow"><use href="#down"/></svg></span>
        <i class="sep"></i>
        <span class="combo pic"><svg class="face" width="16" height="10" viewBox="0 0 16 10"><path d="M0 0h7v4H0z" fill="#c8362e"/><path d="M8 0h8v4H8z" fill="#e2873b"/><path d="M0 5h7v5H0z" fill="#3fa556"/><path d="M8 5h8v5H8z" fill="#5c8fe0"/></svg><select aria-label="Data visualization"><option></option></select><svg class="arrow"><use href="#down"/></svg></span>
        <svg width="14" height="9"><use href="#tri"/></svg>
      </div>

      <div class="modebar">
        <svg width="24" height="20" viewBox="0 0 24 20"><use href="#snapseg" width="18" height="18"/><circle cx="17" cy="12" r="5.500" fill="#fff" stroke="#c8242a" stroke-width="2.500"/><path d="M13 8l8 8" stroke="#c8242a" stroke-width="2.500"/></svg>
        <svg width="17" height="17"><use href="#snapseg"/></svg>
        <button class="toggle" aria-label="Multiple interactive scaling"><svg width="26" height="18" viewBox="0 0 26 18"><use href="#snapseg" width="18" height="18"/><use href="#snapseg" x="8" width="18" height="18"/></svg></button>
        <i class="sep"></i>
        <button class="toggle" aria-label="Enable connected objects"><svg width="26" height="18" viewBox="0 0 26 18"><rect x="7" y="2" width="10" height="4" fill="#fff" stroke="#111" stroke-width="1.500"/><path d="M1 11h6v6H1zM14 11h6v6h-6z" fill="#d2a26e" stroke="#543"/><path d="M23 2v14M20.500 4.500L23 1.500l2.500 3M20.500 13.500l2.500 3 2.500-3" stroke="#36a" fill="none"/></svg></button>
        <i class="sep"></i>
        <button class="toggle" aria-label="Rectangular marquee"><svg width="18" height="14" viewBox="0 0 18 14" fill="#eee" stroke="#222"><rect x=".5" y=".5" width="17" height="13"/><rect x="3" y="3" width="12" height="8"/></svg></button>
        <svg width="20" height="16" viewBox="0 0 20 16" fill="none"><path d="M4 9Q0 5 6 3q9-3 12 2 0 6-8 6-5 0-6-2-2 3 1 5" stroke="#222" stroke-width="2.800"/><path d="M4 9Q0 5 6 3q9-3 12 2 0 6-8 6-5 0-6-2-2 3 1 5" stroke="#eee"/></svg>
        <svg width="22" height="16" viewBox="0 0 22 16" fill="none"><path d="M4 2l6 4 10-3-4 10-11-1zM4 9q-3 3 1 6" stroke="#222" stroke-width="2.600"/><path d="M4 2l6 4 10-3-4 10-11-1zM4 9q-3 3 1 6" stroke="#eee"/></svg>
        <i class="sep"></i>
        <svg width="25" height="20" viewBox="0 0 25 20"><path d="M2 2h15v7H2z" fill="#e8c7ac" stroke="#965"/><path d="M1 10h18v8h-3v-4H4v4H1z" fill="#b97f4c" stroke="#111"/><path d="M22 2v14M19.500 5L22 1.500l2.500 3.500M19.500 13l2.500 3.500 2.500-3.500" stroke="#36a" fill="none"/></svg>
        <i class="sep"></i>
        <p>Selection Tool: Rectangular Marquee Mode</p>
        <svg width="26" height="22" viewBox="0 0 26 22"><path d="M15 13l8 7" stroke="#345" stroke-width="4"/><path d="M16 14l6 5" stroke="#ccd6f6" stroke-width="2"/><circle cx="13" cy="9" r="6" fill="#dfe3f8" stroke="#345"/><path d="M1 19L24 2" stroke="#234" stroke-width="2"/></svg>
        <svg width="32" height="22" viewBox="0 0 32 22"><circle cx="10" cy="11" r="7.500" fill="none" stroke="#345" stroke-width="4" stroke-dasharray="3 2.900"/><circle cx="10" cy="11" r="6.800" fill="#b9c2dd" stroke="#456"/><circle cx="10" cy="11" r="2" fill="#fff" stroke="#345"/><path d="M24 9.500l3 3 3-3" fill="none" stroke="#222" stroke-width="1.500"/></svg>
        <svg width="32" height="22" viewBox="0 0 32 22"><path d="M4 10L1 8l1 5 4 4M15 10q5-3 4 1t-5 4" fill="#aeb6d4" stroke="#345"/><ellipse cx="10" cy="13.500" rx="6" ry="6" fill="#aeb6d4" stroke="#345"/><path d="M4 9h12l-6-4z" fill="#c9d0e4" stroke="#345"/><path d="M3 19L20 2" stroke="#234" stroke-width="2"/><path d="M24 9.500l3 3 3-3" fill="none" stroke="#222" stroke-width="1.500"/></svg>
        <svg width="32" height="22" viewBox="0 0 32 22"><path d="M2 5l5-3 5 3v7l-5 3-5-3z" fill="#c9d0e4" stroke="#345"/><path d="M10 11h10v9H10z" fill="#aeb6d4" stroke="#345"/><path d="M3 18L20 3" stroke="#234" stroke-width="2"/><path d="M24 9.500l3 3 3-3" fill="none" stroke="#222" stroke-width="1.500"/></svg>
        <button class="toggle big" aria-label="Auto join"><svg width="18" height="18" viewBox="0 0 18 18"><path d="M.5 2.500h11v13H.5z" fill="#28304f" stroke="#111"/><path d="M14 1v16" stroke="#345" stroke-width="2"/><path d="M14.500 3.500h3v11h-3z" fill="#dde" stroke="#345"/></svg></button>
        <button class="toggle big" aria-label="Auto save"><svg width="22" height="19" viewBox="0 0 22 19"><path d="M1 1h16v13H3l-2-2z" fill="#8c93b0" stroke="#334"/><path d="M4 1h9v6H4z" fill="#cdd3e6" stroke="#334"/><circle cx="15" cy="12" r="6" fill="#e4e8f6" stroke="#346"/><path d="M15 8v4h3" stroke="#234" fill="none"/></svg></button>
        <svg width="14" height="9"><use href="#tri"/></svg>
      </div>

      <div class="sheet">
        <div class="origin"><svg width="14" height="14" viewBox="0 0 14 14" fill="none" stroke="#fff"><circle cx="7" cy="7" r="3.500"/><path d="M7 1v4M7 9v4M1 7h4M9 7h4"/></svg></div>
        <svg class="ruler" id="ruler-x"></svg>
        <svg class="ruler" id="ruler-y"></svg>
        <div class="canvas">
          <svg class="drawing" id="drawing">
            <!-- sheet grid -->
            <g stroke="#2e2e2e" stroke-width="2" fill="none">
              <path d="M503.500 250V590M618.500 250V590M733.500 250V590M848.500 250V590"/>
              <path d="M503 251H2000M503 414.500H2000M503 580H2000M503 589.500H2000"/>
            </g>
            <path d="M541 252h40M656 252h40M771 252h40" stroke="#3c3c3c" stroke-width="2"/>
            <path d="M541 414.500h40M656 414.500h40M771 414.500h40M541 579.500h40M656 579.500h40M771 579.500h40" stroke="#3c3c3c" stroke-width="5"/>
            <!-- trestles -->
            <g fill="none" stroke="#74147a">
              <g transform="translate(181.500 100)">
                <path id="trestle" d="M0 0V49.500H65.500L.5 422.500H41L106 49.500H165L230 422.500H270.500L205.500 49.500H270.500V0M82 39h8.500v22H82zM180 39h9v22h-9z"/>
                <path d="M32 279.500h9v29h-9z"/>
              </g>
              <g transform="translate(510.500 100)">
                <use href="#trestle"/>
                <path d="M230 279.500h8.500v29H230z"/>
              </g>
            </g>
            <path d="M503 420.500H2000M743.500 250V590" stroke="#0e3e70"/>
            <path d="M510.500 98.500h271v4h-271z" fill="none" stroke="#62dfe3"/>
            <!-- selected top -->
            <path d="M181 100h270" stroke="#6d522c" stroke-width="9"/>
            <path d="M188 97.500h263" stroke="#b8730f" stroke-width="4" stroke-dasharray="8 8.200"/>
            <path d="M180 102.500h270" stroke="#b8730f" stroke-width="4" stroke-dasharray="8 8.200"/>
            <path d="M181 97.500h270M181 102.500h270" stroke="#857c6e" stroke-opacity=".7"/>
            <g stroke="#fff" fill="#0b3fa8">
              <path d="M177.500 94.500h7v11h-7zM447.500 94.500h7v11h-7zM312.500 94.500h7v11h-7z"/>
              <path d="M178 97.500h6M178 100h6M178 102.500h6M448 97.500h6M448 100h6M448 102.500h6M313 100h6"/>
            </g>
          </svg>

          <div class="floating">
            <div class="float-top"></div>
            <h2 class="palette-head"><svg width="8" height="8"><use href="#close"/></svg>Attributes<svg class="q" width="8" height="12"><use href="#help"/></svg></h2>
            <div class="attributes">
              <div class="attr fill-row">
                <svg width="18" height="18" viewBox="0 0 18 18"><circle cx="8" cy="9" r="6.500" fill="url(#metal)" stroke="#333"/><path d="M4 6q5-5 8 1l-5 5zM4 12q5 1 8-5" fill="#dde4f0" stroke="#456"/><path d="M10 3q6 1 5 11" stroke="#3474c8" stroke-width="2.500" fill="none"/></svg>
                <span class="combo big"><svg class="face" width="10" height="10" viewBox="0 0 10 10"><path d="M1.500 1l7 8M8.500 1l-7 8" stroke="#a32630" stroke-width="3"/></svg><select aria-label="Fill style"><option>None</option></select><svg class="arrow"><use href="#updown"/></svg></span>
              </div>
              <div class="attr">
                <svg width="18" height="18" viewBox="0 0 18 18"><use href="#pencil" x="-2" width="18" height="18"/><path d="M6 15.500h10" stroke="#447" stroke-width="2"/></svg>
                <span class="combo big"><svg class="face" width="14" height="14" viewBox="0 0 14 14"><rect x=".5" y=".5" width="13" height="13" fill="#222" stroke="#000"/></svg><select aria-label="Pen style"><option>Solid</option></select><svg class="arrow"><use href="#updown"/></svg></span>
              </div>
              <button class="swatch" aria-label="Pen colour"></button>
              <button class="flat opacity">100%/100%</button>
              <div class="shadow-row">Drop Sha...<button class="flat" aria-label="Drop shadow"><svg width="8" height="8" viewBox="0 0 8 8"><path d="M2 2h6v6H2z" fill="#888"/><path d="M.5.500h5v5h-5z" fill="#eee" stroke="#666"/></svg></button><button class="flat">...</button></div>
              <span class="combo thickness"><i></i><select aria-label="Line thickness"><option>0.05</option></select><svg class="arrow"><use href="#updown"/></svg></span>
              <div class="markers">
                <button class="flat" aria-label="Start marker"><svg width="8" height="4" fill="#888"><use href="#caret"/></svg></button>
                <button class="flat link" aria-label="Link markers"><svg width="13" height="8" viewBox="0 0 13 8" fill="none" stroke="#222"><rect x=".5" y="1" width="7" height="5.500" rx="2.500"/><rect x="5.500" y="1" width="7" height="5.500" rx="2.500"/><path d="M3.500 4h6"/></svg></button>
                <button class="flat" aria-label="End marker"><svg width="8" height="4" fill="#888"><use href="#caret"/></svg></button>
              </div>
              <div class="more line"><button aria-label="More attributes"><svg width="8" height="4"><use href="#caret"/></svg></button></div>
            </div>
            <div class="grip"></div>
            <h2 class="palette-head"><svg width="8" height="8"><use href="#close"/></svg>Snapping<svg class="q" width="8" height="12"><use href="#help"/></svg></h2>
            <div class="snaps">
              <button class="on" aria-label="Snap to grid"><svg viewBox="0 0 24 20"><g fill="#fff" stroke="#333" stroke-width=".9"><path id="plus" d="M3.500.5h2v2h2v2h-2v2h-2v-2h-2v-2h2z"/><use href="#plus" x="14"/><use href="#plus" y="13"/><use href="#plus" x="14" y="13"/><circle cx="11.500" cy="3.500" r="1.200"/><circle cx="11.500" cy="16.500" r="1.200"/><circle cx="4.500" cy="10" r="1.200"/><circle cx="18.500" cy="10" r="1.200"/></g></svg></button>
              <button class="on" aria-label="Snap to object"><svg viewBox="0 0 24 20"><rect x="4" y="4" width="16" height="12" fill="#dcdffb" stroke="#111"/><g fill="#7fb4d8" stroke="#123"><path d="M2.500 2.500h3v3h-3zM18.500 2.500h3v3h-3zM2.500 14.500h3v3h-3zM18.500 14.500h3v3h-3zM10.500 8.500h3v3h-3z"/></g></svg></button>
              <button class="on" aria-label="Snap to angle"><svg viewBox="0 0 24 20" fill="none"><path d="M4 2v15h15" stroke="#446" stroke-width="2.500"/><path d="M4 2v15h15" stroke="#ccd"/><path d="M5 16l8-8M7 7q6 2 8 8M9 13l3 3" stroke="#445" stroke-width="1.500"/></svg></button>
              <button class="on" aria-label="Snap to intersection"><svg viewBox="0 0 24 20"><path d="M3 4l18 12M3 16L21 4" stroke="#335" stroke-width="2.500"/><path d="M3 4l18 12M3 16L21 4" stroke="#c8cef0"/><path d="M10.500 8.500h3v3h-3z" fill="#7fb4d8" stroke="#123"/></svg></button>
              <button class="on" aria-label="Smart points"><svg viewBox="0 0 24 20"><path d="M7 10h16" stroke="#333" stroke-width="3" stroke-dasharray="3 1"/><path d="M7.500 10h16" stroke="#eee" stroke-dasharray="2 2"/><path d="M2.500 8.500h3v3h-3z" fill="#7fb4d8" stroke="#123"/></svg></button>
              <button aria-label="Snap to distance"><svg viewBox="0 0 24 20"><path d="M7 3l14 14" stroke="#335" stroke-width="2.500"/><path d="M7 3l14 14" stroke="#c8cef0"/><path d="M5 2l6 1-4 6h6M9 5l3 3" fill="none" stroke="#445"/><path d="M10.500 9.500h3v3h-3z" fill="#7fb4d8" stroke="#123"/></svg></button>
              <button aria-label="Snap to edge"><svg viewBox="0 0 24 20"><path d="M8 5l8 5-5 7-7-5z" fill="#dcdffb" stroke="#111"/><path d="M4 1l18 12" stroke="#222" stroke-width="2.500"/><path d="M4 1l18 12" stroke="#eee"/></svg></button>
              <button class="on" aria-label="Snap to tangent"><svg viewBox="0 0 24 20"><circle cx="9" cy="12" r="5.500" fill="#ccd2f5" stroke="#111"/><path d="M5 1l17 12" stroke="#222" stroke-width="2.500"/><path d="M5 1l17 12" stroke="#ddd"/></svg></button>
            </div>
            <div class="float-bottom"></div>
          </div>
        </div>
      </div>
    </section>

    <div class="gutter"></div>

    <aside class="right">
      <h2 class="palette-head"><svg width="8" height="8"><use href="#close"/></svg>Object Info - Shape<svg class="q" width="8" height="12"><use href="#help"/></svg></h2>
      <div class="tabs">
        <button class="active">Shape</button><button>Data</button><button>Render</button>
        <svg class="fly" width="11" height="9"><use href="#flyout"/></svg>
      </div>
      <h3>Rectangle</h3>
      <form class="info">
        <div class="row"><label for="class">Class:</label><span class="combo"><select id="class"><option>None</option></select><svg class="arrow"><use href="#down"/></svg></span></div>
        <div class="row"><label for="layer">Layer:</label><span class="combo"><select id="layer"><option>pruebas trazo 1a1</option></select><svg class="arrow"><use href="#updown"/></svg></span></div>
        <div class="row"><label for="plane">Plane:</label><span class="combo"><select id="plane"><option>Layer</option></select><svg class="arrow"><use href="#down"/></svg></span></div>
        <div class="row"><input type="checkbox" id="material"><label for="material" class="grey">Use Material</label></div>
        <div class="row field"><label for="width">Width:</label><input type="text" id="width" value="474"></div>
        <div class="row field"><label for="height">Height:</label><input type="text" id="height" value="7.5"></div>
        <div class="position">
          <svg width="56" height="42" viewBox="0 0 56 42" fill="none" stroke="#111">
            <circle cx="6" cy="7" r="3" fill="#111"/><circle cx="21" cy="7" r="3"/><circle cx="36" cy="7" r="3"/>
            <circle cx="6" cy="17" r="3"/><circle cx="21" cy="17" r="3"/><circle cx="36" cy="17" r="3"/>
            <circle cx="6" cy="27" r="3"/><circle cx="21" cy="27" r="3"/><circle cx="36" cy="27" r="3"/>
            <text x="44" y="21">H</text><text x="17" y="41">W</text>
          </svg>
          <div class="coords">
            <div><label for="x">X:</label><input type="text" id="x" value="-985"></div>
            <div><label for="y">Y:</label><input type="text" id="y" value="563.5"></div>
          </div>
        </div>
        <div class="row field"><label for="rotation">Rotation:</label><input type="text" id="rotation" value="0.00°"></div>
        <dl>
          <dt>Ratio:</dt><dd>1 : 63.2</dd>
          <dt>Perim:</dt><dd>963mm</dd>
          <dt>Area:</dt><dd>0.004 sq m</dd>
        </dl>
      </form>
      <div class="name-row"><label for="name">Name:</label><input type="text" id="name"></div>
      <div class="grip"></div>

      <h2 class="palette-head"><svg width="8" height="8"><use href="#close"/></svg>Navigation - Design Layers<svg class="q" width="8" height="12"><use href="#help"/></svg></h2>
      <div class="tabs nav-tabs">
        <button aria-label="Classes"><svg width="18" height="14"><use href="#classes"/></svg></button>
        <button class="active" aria-label="Design Layers"><svg width="16" height="14"><use href="#layers"/></svg></button>
        <button aria-label="Sheet Layers"><svg width="16" height="14" viewBox="0 0 16 14"><path d="M.5.5h15v9l-4 4H.5z" fill="#eee" stroke="#333"/><path d="M3 3h10v5h-3v3H3z" fill="none" stroke="#555"/></svg></button>
        <button aria-label="Viewports"><svg width="16" height="14" viewBox="0 0 16 14"><path d="M3 11l1-5 2-2 3 2 3-2 1 7z" fill="#c6ccf6" stroke="#335"/><path d="M.5 4V.500H4M12 .500h3.500V4M15.500 10v3.500H12M4 13.500H.5V10" fill="none" stroke="#333"/></svg></button>
        <button aria-label="Saved Views"><svg width="14" height="14"><use href="#eyepage"/></svg></button>
        <button aria-label="References"><svg width="16" height="14" viewBox="0 0 16 14"><path d="M5.500.5h7l3 3v10h-10z" fill="#fff" stroke="#333"/><path d="M10 3H5Q1 3 1 7t4 4" fill="none" stroke="#222" stroke-width="1.500"/><path d="M8 .5L11.500 3 8 5.500zM5 8l4 3-4 2.500z" fill="#fff" stroke="#222" stroke-width=".8"/></svg></button>
        <svg class="fly" width="11" height="9"><use href="#flyout"/></svg>
      </div>
      <div class="nav-options">
        <div class="row"><label for="options">Layer Options:</label><span class="combo"><select id="options"><option>Show/Snap/Modify Others</option></select><svg class="arrow"><use href="#updown"/></svg></span></div>
        <div class="row"><label for="filter">Filter:</label><span class="combo"><select id="filter"><option>&lt;All Layers&gt;</option></select><svg class="arrow"><use href="#updown"/></svg></span></div>
        <div class="search"><svg width="12" height="12" viewBox="0 0 12 12" fill="none" stroke="#666" stroke-width="1.200"><circle cx="5" cy="5" r="4"/><path d="M8 8l3.500 3.500"/></svg><input type="text" placeholder="Search" aria-label="Search layers"></div>
      </div>
      <div class="layers">
        <table>
          <colgroup><col class="c-vis"><col class="c-check"><col class="c-name"><col class="c-num"><col class="c-story"><col></colgroup>
          <thead><tr><th>Visibility</th><th></th><th>Design Layer Name</th><th># <svg width="8" height="5" viewBox="0 0 8 5"><path d="M.5 4.500L4 1l3.500 3.500" fill="none" stroke="#777"/></svg></th><th>Story</th><th></th></tr></thead>
          <tbody>
            <tr class="current"><td><svg><use href="#hidden"/></svg></td><td><svg viewBox="0 0 12 12"><path d="M1.500 7l2 3.500L10.500 2" fill="none" stroke="#888" stroke-width="3"/><path d="M1.500 7l2 3L10 2" fill="none" stroke="#dde"/></svg></td><td>pruebas trazo 1a1</td><td>1</td><td></td><td></td></tr>
            <tr><td><svg><use href="#hidden"/></svg></td><td></td><td>3D</td><td>2</td><td></td><td></td></tr>
            <tr><td><svg><use href="#hidden"/></svg></td><td></td><td>1a1piezas finales en table...</td><td>3</td><td></td><td></td></tr>
            <tr><td><svg><use href="#hidden"/></svg></td><td></td><td>piezas finales en tablero</td><td>4</td><td></td><td></td></tr>
            <tr><td><svg><use href="#hidden"/></svg></td><td></td><td>tapas cajas</td><td>5</td><td></td><td></td></tr>
            <tr><td><svg><use href="#hidden"/></svg></td><td></td><td>cajones</td><td>6</td><td></td><td></td></tr>
            <tr><td><svg><use href="#hidden"/></svg></td><td></td><td>cubierta</td><td>7</td><td></td><td></td></tr>
            <tr><td><svg><use href="#hidden"/></svg></td><td></td><td>cubierta inferior</td><td>8</td><td></td><td></td></tr>
            <tr><td><svg><use href="#hidden"/></svg></td><td></td><td>piezas cuerpo central</td><td>9</td><td></td><td></td></tr>
            <tr><td><svg><use href="#hidden"/></svg></td><td></td><td>patas interiores</td><td>10</td><td></td><td></td></tr>
            <tr><td><svg><use href="#hidden"/></svg></td><td></td><td>patas exteriores</td><td>11</td><td></td><td></td></tr>
            <tr><td><svg><use href="#hidden"/></svg></td><td></td><td>ESCRITORIO COMPLETO</td><td>12</td><td></td><td></td></tr>
            <tr><td><svg><use href="#hidden"/></svg></td><td></td><td>Trazos</td><td>13</td><td></td><td></td></tr>
          </tbody>
        </table>
      </div>
    </aside>
  </main>

  <footer class="status">
    <p>For Help, press F1 or click the ? icon</p>
    <span>X:&nbsp; -620</span><span>Y:&nbsp; 563.5</span><span>L:&nbsp; 837.8</span><span>A:&nbsp; 137.74°</span>
    <svg width="16" height="10" viewBox="0 0 16 10"><path d="M4 1l8 4-8 4z" fill="#888"/></svg>
    <i class="corner"></i>
  </footer>

  <script>
    // rulers: 100 units = 57.05px, zero at the drawing origin
    const step = 5.705;
    function drawRuler(id, zero, vertical) {
      const ruler = document.getElementById(id);
      const box = ruler.getBoundingClientRect();
      const length = vertical ? box.height : box.width;
      let ticks = '', labels = '';
      for (let i = Math.ceil(-zero / step); zero + i * step < length; i++) {
        const p = Math.round(zero + i * step) + 0.5;
        const from = i % 10 === 0 ? 0 : i % 5 === 0 ? 9 : 12;
        ticks += vertical ? `M${from} ${p}H15` : `M${p} ${from}V15`;
        if (i % 10 === 0) {
          const n = Math.abs(i) * 10;
          labels += vertical
            ? `<text transform="translate(9 ${p - 3}) rotate(-90)">${n}</text>`
            : `<text x="${p + 3}" y="9">${n}</text>`;
        }
      }
      const edge = vertical ? `M14.500 0V${length}` : `M0 14.500H${length}`;
      const mark = vertical
        ? '<path d="M0 98h15" stroke="#77701a" stroke-width="5"/><path d="M0 98.500h15" stroke="#f0e87a"/>'
        : '<path d="M390 0v15" stroke="#77701a" stroke-width="5"/><path d="M390.500 0v15" stroke="#f0e87a"/>';
      ruler.innerHTML = `<path d="${ticks}${edge}" stroke="#fff" fill="none"/>${labels}${mark}`;
    }
    drawRuler('ruler-x', 743, false);
    drawRuler('ruler-y', 420, true);
  </script>
</body>
</html>
```
FILE: styles.css
```css
* {
  box-sizing: border-box;
}
body {
  margin: 0;
  height: 100vh;
  display: flex;
  flex-direction: column;
  overflow: hidden;
  background: #ebebeb;
  color: #111;
  font-family: Inter, "Liberation Sans", sans-serif;
  font-size: 11px;
}
.sprite {
  position: absolute;
  width: 0;
  height: 0;
}
svg {
  display: block;
  flex: none;
}
h2, h3, p, ul, dl, dd {
  margin: 0;
  padding: 0;
  font-weight: 400;
}
a {
  color: inherit;
  text-decoration: none;
}
button, input, select {
  font: inherit;
  color: inherit;
  margin: 0;
  padding: 0;
  border: 0;
  border-radius: 0;
  background: none;
  appearance: none;
  outline: none;
}
button {
  display: flex;
  align-items: center;
  justify-content: center;
}

/* menu bar */
.menubar {
  flex: none;
  height: 23px;
  display: flex;
  align-items: center;
  padding: 0 22px 0 21px;
  background: #f1f4f5;
  border-bottom: 1px solid #858585;
  font-size: 14px;
  line-height: 22px;
  color: #333;
}
.menus {
  display: flex;
  gap: 17px;
  margin-left: 20px;
}
.menus .app {
  font-weight: 700;
}
.extras {
  margin-left: auto;
  display: flex;
  align-items: center;
  gap: 11px;
}
.clock-group {
  gap: 15px;
  margin-left: 12px;
}
.battery {
  display: flex;
  align-items: center;
  gap: 4px;
  font-size: 12px;
}
.clock {
  margin-right: 5px;
}

/* window title */
.titlebar {
  flex: none;
  height: 22px;
  display: grid;
  grid-template-columns: 1fr auto 1fr;
  align-items: center;
  background: linear-gradient(#e9e6e9, #d2d0d2);
  border-bottom: 1px solid #b0b0b0;
  font-size: 12px;
  color: #2c2c2c;
}
.lights {
  display: flex;
  align-items: center;
  gap: 8px;
  padding-left: 8px;
  color: #a8a6a8;
}
.lights span {
  margin-left: 1px;
}
.light {
  width: 12px;
  height: 12px;
  border-radius: 50%;
}
.off {
  border: 1px solid #b4b4b4;
  background: radial-gradient(#999 2px, #d4d4d4 3px);
}
.min {
  background: #fdb844;
}
.max {
  background: #23c152;
}
.doc-title {
  display: flex;
  align-items: center;
  gap: 5px;
  font-size: 13px;
}
.account {
  display: flex;
  align-items: center;
  justify-content: flex-end;
  gap: 16px;
  padding-right: 10px;
  color: #555;
}
.account a {
  display: flex;
  align-items: center;
  gap: 5px;
}

.workspace {
  flex: 1;
  min-height: 0;
  display: flex;
}
.gutter, .grip {
  flex: none;
  display: flex;
  align-items: center;
  justify-content: center;
  background: #c0c0c0;
}
.gutter {
  width: 6px;
}
.grip {
  height: 6px;
}
.gutter::before, .grip::before {
  content: "";
  width: 2px;
  height: 2px;
  background: #777;
}
.gutter::before {
  box-shadow: 0 -5px #777, 0 5px #777;
}
.grip::before {
  box-shadow: -5px 0 #777, 5px 0 #777;
}

/* palettes */
.palette-head {
  flex: none;
  height: 15px;
  display: flex;
  align-items: center;
  gap: 6px;
  padding-left: 5px;
  background: linear-gradient(90deg, #fff, #e2e2e2);
  font-family: Inter, "Liberation Sans", sans-serif;
  font-size: 11px;
  line-height: 15px;
}
.palette-head .q {
  margin-left: auto;
  margin-right: 8px;
}
.more {
  flex: none;
  height: 12px;
  display: flex;
  align-items: center;
  justify-content: center;
  background: #ebebeb;
}
.more button {
  width: 19px;
  height: 8px;
  border: 1px solid #aaa;
  background: #f4f4f4;
}

.left {
  flex: none;
  width: 140px;
  display: flex;
  flex-direction: column;
  background: #fff;
}
.tools {
  flex: none;
  display: grid;
  grid-template-columns: repeat(4, 31px);
  grid-auto-rows: 25px;
  padding-bottom: 6px;
}
.tools button {
  position: relative;
}
.tools svg {
  width: 24px;
  height: 24px;
}
.tools .flag {
  position: absolute;
  right: 0;
  bottom: 0;
  width: 6px;
  height: 6px;
}
.tools .on, .categories .on {
  background: #c2c2c2;
}
.lil {
  fill: #ccccfa;
  stroke: #303555;
}
.toolset {
  flex: 1;
  min-height: 0;
  overflow: hidden;
  list-style: none;
  font-family: Roboto, "Liberation Sans", sans-serif;
}
.toolset li {
  height: 25px;
  display: flex;
  align-items: center;
  gap: 3px;
  padding-left: 4px;
}
.toolset svg {
  width: 28px;
  height: 24px;
}
.toolset .next {
  width: 6px;
  height: 8px;
}
.categories {
  flex: none;
  display: grid;
  grid-template-columns: repeat(4, 31px);
  grid-auto-rows: 25px;
  background: #ebebeb;
}
.categories button {
  border: 1px solid #aaa;
  border-width: 1px 0 0 1px;
}
.categories button:nth-child(4n), .categories button:last-child {
  border-right-width: 1px;
}
.categories button:nth-child(n + 10) {
  border-bottom-width: 1px;
}
.categories svg {
  width: 24px;
  height: 22px;
}

/* combo boxes */
.combo {
  display: flex;
  align-items: center;
  width: 40px;
  height: 15px;
  background: #fff;
  border: 1px solid #bbb;
  border-right: 0;
  border-radius: 4px;
  font-size: 10px;
}
.combo select {
  flex: 1;
  min-width: 0;
  height: 13px;
  padding-left: 9px;
}
.combo .arrow {
  width: 13px;
  height: 15px;
  margin: -1px 0;
  border-radius: 0 4px 4px 0;
  background: linear-gradient(#6db3f8, #1d78ef);
}
.combo.pic {
  width: 44px;
}
.combo.pic .face {
  margin-left: 9px;
}
.combo.pic select {
  padding: 0;
}
.combo.wide {
  width: 58px;
}
.combo.square select {
  padding-left: 3px;
}
.combo.dim {
  color: #777;
}

/* document */
.document {
  flex: 1;
  min-width: 0;
  display: flex;
  flex-direction: column;
}
.doc-tabs {
  flex: none;
  height: 28px;
  display: flex;
  align-items: flex-end;
  background: linear-gradient(#bcbcbc, #cacaca);
  font-size: 13px;
}
.doc-tabs button {
  width: 233px;
  height: 24px;
  justify-content: flex-start;
  gap: 5px;
  padding-left: 16px;
  color: #333;
  white-space: nowrap;
}
.doc-tabs .active {
  height: 25px;
  padding-left: 13px;
  background: #ececec;
  border-radius: 5px 5px 0 0;
  box-shadow: 0 0 2px #555;
  clip-path: inset(-3px -3px 0);
  color: #000;
}
.sep {
  width: 1px;
  height: 18px;
  background: #ccc;
}
.viewbar, .modebar {
  flex: none;
  display: grid;
  align-items: center;
  justify-items: center;
  background: #ececec;
  font-family: Roboto, "Liberation Sans", sans-serif;
}
.viewbar {
  height: 26px;
  border-bottom: 1px solid #c8c8c8;
  grid-template-columns: 24px 22px 1px 30px 50px 1px 50px 51px 1px 30px 43px 1px 50px 1px 31px 23px 1px 26px 60px 30px 28px 46px 1px 27px 67px 1px 27px 43px 1px 49px 1px 49px 18px 1fr;
}
.modebar {
  height: 36px;
  grid-template-columns: 38px 22px 34px 10px 34px 8px 34px 26px 28px 16px 32px 6px 1fr 35px 45px 45px 45px 37px 37px 27px;
  font-size: 10px;
}
.modebar p {
  justify-self: start;
  padding-left: 6px;
}
.toggle {
  width: 30px;
  height: 22px;
  background: #d2d2d2;
  border: 1px solid #b0b0b0;
}
.viewbar .toggle {
  width: 25px;
  height: 20px;
}
.toggle.big {
  width: 32px;
  height: 24px;
}
.angle {
  width: 65px;
  height: 16px;
  padding-left: 3px;
  background: #fff;
  border: 1px solid #bbb;
  font-size: 10px;
}

.sheet {
  flex: 1;
  min-height: 0;
  display: grid;
  grid-template-columns: 15px 1fr;
  grid-template-rows: 15px 1fr;
  background: #000;
}
.origin svg {
  margin: 0 0 0 1px;
}
.ruler {
  width: 100%;
  height: 100%;
  overflow: hidden;
}
.ruler text {
  fill: #fff;
  font-family: "Liberation Sans", sans-serif;
  font-size: 9px;
}
.canvas {
  position: relative;
  min-width: 0;
  overflow: hidden;
  background: #0c0c0c;
}
.drawing {
  width: 100%;
  height: 100%;
}

/* palette floating over the drawing */
.floating {
  position: absolute;
  left: 7px;
  top: 21px;
  width: 125px;
  border-radius: 4px;
  overflow: hidden;
  background: #ebebeb;
}
.float-top {
  height: 16px;
  background: #f5f5f5;
  border-bottom: 1px solid #ddd;
}
.attributes {
  padding: 5px 9px 7px 8px;
}
.attr {
  display: flex;
  align-items: center;
  justify-content: space-between;
  height: 18px;
}
.fill-row {
  margin-bottom: 32px;
}
.combo.big {
  width: 85px;
  height: 18px;
  font-size: 11px;
}
.combo.big .face {
  margin-left: 7px;
}
.combo.big select {
  height: 16px;
  padding: 0 9px 0 0;
  text-align: right;
  text-align-last: right;
}
.combo.big .arrow {
  width: 15px;
  height: 18px;
}
.swatch {
  width: 100%;
  height: 25px;
  margin-top: 2px;
  border: 1px solid #aaa;
  box-shadow: inset 0 0 0 1px #eee;
  background: #1affff;
}
.flat {
  border: 1px solid #b4b4b4;
  background: #f2f2f2;
}
.opacity {
  width: 100%;
  height: 15px;
  margin-top: 4px;
  color: #444;
}
.shadow-row {
  display: flex;
  align-items: center;
  height: 14px;
  margin-top: 8px;
  padding-left: 2px;
  color: #444;
}
.shadow-row .flat {
  width: 22px;
  height: 14px;
}
.shadow-row .flat:first-of-type {
  margin-left: auto;
}
.combo.thickness {
  width: 108px;
  margin-top: 6px;
}
.thickness i {
  flex: 1;
  height: 1px;
  margin-left: 10px;
  background: #111;
}
.combo.thickness select {
  flex: none;
  width: 31px;
  padding-left: 5px;
}
.markers {
  display: flex;
  justify-content: space-between;
  margin: 9px -3px 0;
}
.markers .flat {
  width: 18px;
  height: 15px;
  border-color: #ccc;
}
.markers .link {
  width: 27px;
  border-color: #aaa;
}
.more.line {
  height: 8px;
  margin: 6px -3px 0;
  border-top: 1px solid #ccc;
}
.snaps {
  display: grid;
  grid-template-columns: repeat(4, 1fr);
  grid-auto-rows: 25px;
}
.snaps button {
  border-right: 1px solid #b0b0b0;
  border-bottom: 1px solid #b0b0b0;
}
.snaps .on {
  background: #d2d2d2;
}
.snaps svg {
  width: 24px;
  height: 20px;
}
.float-bottom {
  height: 15px;
}

/* object info */
.right {
  flex: none;
  width: 401px;
  display: flex;
  flex-direction: column;
  background: #ebebeb;
  font-family: Roboto, "Liberation Sans", sans-serif;
  font-size: 10px;
}
.tabs {
  flex: none;
  display: flex;
  align-items: flex-end;
  height: 26px;
  padding-left: 3px;
  background: #bebebe;
  font-family: Inter, "Liberation Sans", sans-serif;
  font-size: 11px;
}
.tabs button {
  min-width: 52px;
  height: 14px;
  margin-bottom: 4px;
  border-right: 1px solid #444;
}
.tabs .active {
  height: 22px;
  margin: 0;
  padding: 0 12px;
  border: 0;
  border-radius: 5px 5px 0 0;
  background: #ebebeb;
  box-shadow: 0 0 2px #555;
  clip-path: inset(-3px -3px 0);
}
.fly {
  align-self: flex-start;
  margin: 3px 3px 0 auto;
}
.right h3 {
  flex: none;
  height: 22px;
  padding-left: 2px;
  border-bottom: 1px solid #ccc;
  font-family: Inter, "Liberation Sans", sans-serif;
  font-size: 11px;
  font-weight: 700;
  line-height: 22px;
}
.info {
  flex: 1;
  min-height: 0;
  padding: 2px 5px 0 5px;
}
.row {
  display: flex;
  align-items: center;
  height: 20px;
}
.row label {
  width: 36px;
  white-space: nowrap;
}
.row .combo {
  flex: 1;
}
.row .grey {
  width: auto;
  color: #444;
}
.info [type="checkbox"] {
  width: 10px;
  height: 10px;
  margin: 0 3px 0 2px;
  background: #fff;
  border: 1px solid #aaa;
  border-radius: 2px;
}
.info .row label {
  padding-left: 2px;
}
.info .row .grey {
  padding: 0;
}
.row.field {
  height: 21px;
}
.info .field label {
  width: 49px;
}
.info input[type="text"], .name-row input {
  flex: 1;
  height: 16px;
  padding-left: 3px;
  background: #fff;
  border: 1px solid #c4c4c4;
}
.position {
  display: flex;
  height: 73px;
  margin: 2px 0 1px;
  padding: 13px 4px 0 11px;
  background: #e3e3e3;
  border: 1px solid #dadada;
  border-radius: 4px;
}
.position svg {
  margin-top: 3px;
}
.position text {
  fill: #111;
  stroke: none;
}
.coords {
  flex: 1;
  margin-left: 4px;
}
.coords div {
  display: flex;
  align-items: center;
  height: 20px;
}
.coords label {
  width: 17px;
}
.info dl {
  display: grid;
  grid-template-columns: 49px 1fr;
  grid-auto-rows: 19px;
  align-items: center;
  padding: 1px 0 0 2px;
}
.name-row {
  flex: none;
  display: flex;
  align-items: center;
  gap: 3px;
  height: 21px;
  padding: 0 2px;
  border-top: 1px solid #ccc;
}

/* navigation */
.nav-tabs {
  height: 25px;
  padding-left: 7px;
}
.nav-tabs button {
  min-width: 0;
  height: 15px;
  margin-bottom: 3px;
  padding: 0 3px;
}
.nav-tabs button:first-child {
  padding: 0;
  border: 0;
}
.nav-tabs .active {
  height: 22px;
  margin: 0;
  padding: 0 4px;
}
.nav-options {
  flex: none;
  padding: 2px 2px 0 4px;
}
.nav-options .row {
  height: 17px;
}
.nav-options .row label {
  width: 66px;
}
.search {
  display: flex;
  align-items: center;
  justify-content: center;
  gap: 5px;
  height: 19px;
  margin: 2px 0 1px -2px;
  background: #fff;
  border: 1px solid #c0c0c0;
  border-radius: 4px;
  font-family: Inter, "Liberation Sans", sans-serif;
  font-size: 11px;
}
.search input {
  width: 52px;
}
.search input::placeholder {
  color: #aaa;
  opacity: 1;
}
.layers {
  height: 294px;
  flex: none;
  margin-left: 1px;
  overflow: hidden;
  background: linear-gradient(90deg, #eee 1px, transparent 1px) 2px 0 / 16px 100% no-repeat,
    linear-gradient(90deg, #eee 1px, transparent 1px) 18px 0 / 16px 100% no-repeat,
    linear-gradient(90deg, #eee 1px, transparent 1px) 34px 0 / 16px 100% no-repeat,
    linear-gradient(90deg, #eee 1px, transparent 1px) 51px 0 / 16px 100% no-repeat,
    #fff;
  border: 1px solid #ccc;
  border-width: 1px 1px 1px 0;
}
table {
  width: 100%;
  table-layout: fixed;
  border-collapse: collapse;
}
.c-vis {
  width: 52px;
}
.c-check, .c-num {
  width: 30px;
}
.c-name {
  width: 128px;
}
.c-story {
  width: 113px;
}
th {
  height: 21px;
  padding: 0 0 2px 4px;
  background: #fff;
  border-right: 1px solid #ddd;
  color: #555;
  font-family: Inter, "Liberation Sans", sans-serif;
  font-size: 11px;
  font-weight: 400;
  text-align: left;
  white-space: nowrap;
}
th:last-child {
  border: 0;
}
th svg {
  display: inline-block;
  margin-left: 2px;
  vertical-align: middle;
}
td {
  height: 15px;
  padding: 0 0 0 4px;
  line-height: 13px;
  white-space: nowrap;
}
td svg {
  width: 12px;
  height: 12px;
}
td:first-child {
  padding-left: 19px;
}
td:nth-child(2) {
  padding-left: 9px;
}
.current {
  background: #b3d6fa;
}
.current td:nth-child(3) {
  font-weight: 700;
}

/* status bar */
.status {
  flex: none;
  height: 15px;
  display: flex;
  align-items: center;
  padding-left: 6px;
  background: #cdcdcd;
  font-family: Roboto, "Liberation Sans", sans-serif;
  font-size: 10px;
}
.status p {
  flex: 1;
}
.status span {
  width: 80px;
  height: 14px;
  padding-left: 3px;
  border: 1px solid #b2b2b2;
  border-right-color: #999;
  line-height: 14px;
}
.corner {
  width: 15px;
  height: 15px;
  background: #f2f2f2;
}
```
